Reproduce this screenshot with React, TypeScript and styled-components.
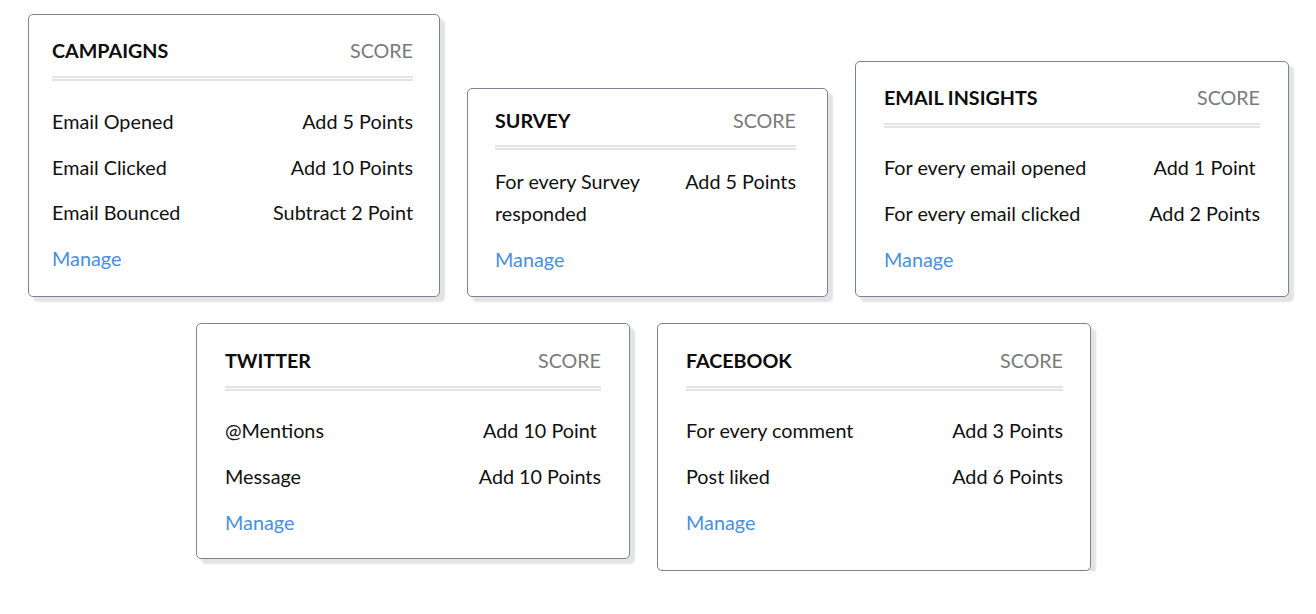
import React from "react";
import styled, { createGlobalStyle } from "styled-components";

const GlobalStyle = createGlobalStyle`
  html, body { margin: 0; padding: 0; background: #ffffff; }
  body { font-family: Lato, "Open Sans", sans-serif; color: #111111; }
`;

const Page = styled.div`
  display: flex;
  flex-direction: column;
  gap: 26px;
  padding-top: 14px;
`;

const Row = styled.div<{ $align: string; $left: number }>`
  display: flex;
  align-items: ${(p) => p.$align};
  gap: 27px;
  padding-left: ${(p) => p.$left}px;
`;

const Card = styled.section<{ $w: number; $pad: string }>`
  box-sizing: border-box;
  width: ${(p) => p.$w}px;
  padding: ${(p) => p.$pad};
  background: #ffffff;
  border: 1px solid #7a8397;
  border-radius: 5px;
  box-shadow: 5px 5px 2px #e3e3e3;
  display: flex;
  flex-direction: column;
`;

const Header = styled.div<{ $gap: number }>`
  display: flex;
  justify-content: space-between;
  align-items: center;
  height: 22px;
  margin-bottom: ${(p) => p.$gap}px;
`;

const Title = styled.h2`
  margin: 0;
  font-size: 19.7px;
  font-weight: 700;
  color: #0d0d0d;
  line-height: 22px;
`;

const Score = styled.span`
  font-size: 19.7px;
  line-height: 22px;
  color: #7a7a7a;
`;

const Divider = styled.div<{ $after: number }>`
  height: 1px;
  border-top: 2px solid #e4e4e4;
  border-bottom: 2px solid #e4e4e4;
  margin-bottom: ${(p) => p.$after}px;
`;

const Rules = styled.div<{ $gap: number }>`
  display: grid;
  grid-template-columns: 1fr auto;
  row-gap: ${(p) => p.$gap}px;
  font-size: 19.8px;
  line-height: 32px;
  color: #111111;
`;

const Label = styled.div``;

const Value = styled.div<{ $align: "end" | "center" }>`
  justify-self: ${(p) => (p.$align === "end" ? "end" : "stretch")};
  text-align: ${(p) => (p.$align === "end" ? "right" : "center")};
  white-space: nowrap;
`;

const Manage = styled.a`
  grid-column: 1 / -1;
  color: #4a8fe0;
  text-decoration: none;
  cursor: pointer;
`;

type Rule = [string, string];

type CardDef = {
  title: string;
  w: number;
  pad: string;
  headGap: number;
  after: number;
  rowGap: number;
  align: "end" | "center";
  rules: Rule[];
};

const ScoreCard = ({ c }: { c: CardDef }) => (
  <Card $w={c.w} $pad={c.pad}>
    <Header $gap={c.headGap}>
      <Title>{c.title}</Title>
      <Score>SCORE</Score>
    </Header>
    <Divider $after={c.after} />
    <Rules $gap={c.rowGap}>
      {c.rules.map(([l, v]) => (
        <React.Fragment key={l}>
          <Label>{l}</Label>
          <Value $align={c.align}>{v}</Value>
        </React.Fragment>
      ))}
      <Manage>Manage</Manage>
    </Rules>
  </Card>
);

const row1: CardDef[] = [
  {
    title: "CAMPAIGNS",
    w: 412,
    pad: "25px 26px 22px 23px",
    headGap: 14,
    after: 24,
    rowGap: 13.5,
    align: "end",
    rules: [
      ["Email Opened", "Add 5 Points"],
      ["Email Clicked", "Add 10 Points"],
      ["Email Bounced", "Subtract 2 Point"],
    ],
  },
  {
    title: "SURVEY",
    w: 361,
    pad: "21px 31px 21px 27px",
    headGap: 13,
    after: 15,
    rowGap: 14,
    align: "center",
    rules: [["For every Survey responded", "Add 5 Points"]],
  },
  {
    title: "EMAIL INSIGHTS",
    w: 434,
    pad: "25px 28px 21px 28px",
    headGap: 14,
    after: 23,
    rowGap: 14,
    align: "center",
    rules: [
      ["For every email opened", "Add 1 Point"],
      ["For every email clicked", "Add 2 Points"],
    ],
  },
];

const row2: CardDef[] = [
  {
    title: "TWITTER",
    w: 434,
    pad: "26px 28px 20px 28px",
    headGap: 14,
    after: 23,
    rowGap: 14,
    align: "center",
    rules: [
      ["@Mentions", "Add 10 Point"],
      ["Message", "Add 10 Points"],
    ],
  },
  {
    title: "FACEBOOK",
    w: 434,
    pad: "26px 27px 32px 28px",
    headGap: 14,
    after: 23,
    rowGap: 14,
    align: "center",
    rules: [
      ["For every comment", "Add 3 Points"],
      ["Post liked", "Add 6 Points"],
    ],
  },
];

export default function App() {
  return (
    <>
      <GlobalStyle />
      <Page>
        <Row $align="flex-end" $left={28}>
          {row1.map((c) => (
            <ScoreCard key={c.title} c={c} />
          ))}
        </Row>
        <Row $align="flex-start" $left={196}>
          {row2.map((c) => (
            <ScoreCard key={c.title} c={c} />
          ))}
        </Row>
      </Page>
    </>
  );
}
